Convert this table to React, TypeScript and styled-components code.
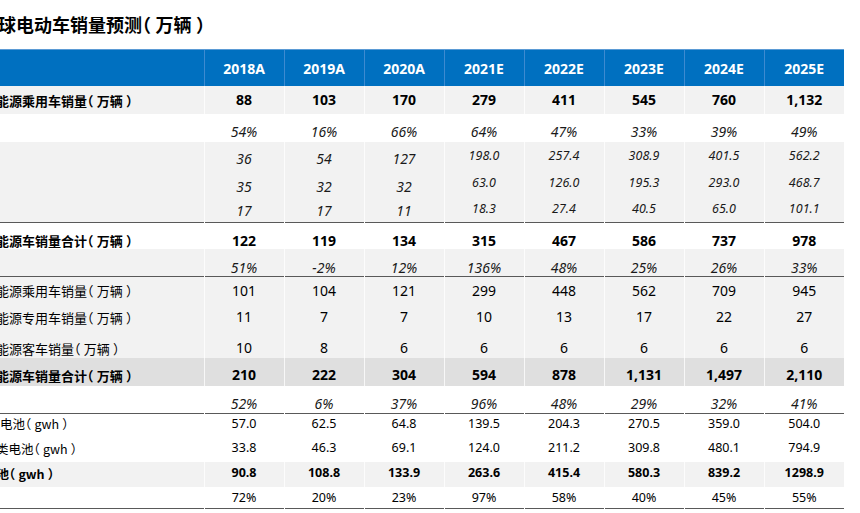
import React from "react";
import styled, { createGlobalStyle } from "styled-components";

const GlobalStyle = createGlobalStyle`
  html, body {
    margin: 0;
    padding: 0;
    background: #ffffff;
    overflow: hidden;
  }
  body {
    font-family: "Noto Sans", "Noto Sans CJK SC", sans-serif;
    color: #000000;
  }
`;

const cjk = `"Noto Sans CJK SC", "Noto Sans", sans-serif`;

const Page = styled.div`
  width: 860px;
  height: 513px;
  overflow: hidden;
`;

const Title = styled.h1`
  margin: 0;
  height: 49px;
  line-height: 48px;
  font-family: ${cjk};
  font-size: 18px;
  font-weight: 700;
  color: #000000;
  text-indent: -20px;
  white-space: nowrap;
`;

// YaHei style brackets: the ink sits on the outer side, the gap on the inner side
const Paren = styled.span<{ $open?: boolean }>`
  font-feature-settings: "halt" 1;
  padding-left: ${(p) => (p.$open ? "0" : "0.25em")};
  padding-right: ${(p) => (p.$open ? "0.25em" : "0")};
`;

function withParens(text: string) {
  return text.split(/([（）])/).map((part, i) => {
    if (part === "（") return <Paren key={i} $open>（</Paren>;
    if (part === "）") return <Paren key={i}>）</Paren>;
    return <React.Fragment key={i}>{part}</React.Fragment>;
  });
}

const Table = styled.table`
  border-collapse: collapse;
  table-layout: fixed;
  width: 844px;
`;

const Col = styled.col<{ $w: number }>`
  width: ${(p) => p.$w}px;
`;

const HeadCell = styled.th<{ $first?: boolean }>`
  height: 36px;
  padding: 0;
  background: #0070c0;
  border-top: 1px solid #5b9bd5;
  border-left: ${(p) => (p.$first ? "none" : "1px solid #3d8ad0")};
  color: #ffffff;
  font-size: 14px;
  font-weight: 700;
  text-align: center;
`;

type Tone = "white" | "gray" | "dark";

const tones: Record<Tone, string> = {
  white: "#ffffff",
  gray: "#f2f2f2",
  dark: "#dfdfdf",
};

const Row = styled.tr<{ $h: number; $tone: Tone; $rule?: boolean }>`
  height: ${(p) => p.$h}px;
  background: ${(p) => tones[p.$tone]};
  border-bottom: ${(p) => (p.$rule ? "1px solid #595959" : "none")};
`;

const Label = styled.td<{ $bold?: boolean; $indent: number; $size: number; $pad: number }>`
  box-sizing: border-box;
  padding: ${(p) => p.$pad}px 0 0 0;
  vertical-align: top;
  font-family: ${cjk};
  font-size: ${(p) => p.$size}px;
  font-weight: ${(p) => (p.$bold ? 700 : 400)};
  text-indent: ${(p) => p.$indent}px;
  white-space: nowrap;
  color: #000000;
  line-height: 1;
`;

const Num = styled.td<{
  $bold?: boolean;
  $italic?: boolean;
  $size: number;
  $pad: number;
}>`
  box-sizing: border-box;
  padding: ${(p) => p.$pad}px 0 0 0;
  text-align: center;
  vertical-align: top;
  font-size: ${(p) => p.$size}px;
  font-weight: ${(p) => (p.$bold ? 700 : 400)};
  font-style: ${(p) => (p.$italic ? "italic" : "normal")};
  color: ${(p) => (p.$italic ? "#1a1a1a" : "#000000")};
  border-left: 1px solid rgba(255, 255, 255, 0.75);
  line-height: 1;
  white-space: nowrap;
`;

type RowData = {
  h: number;
  tone: Tone;
  rule?: boolean;
  label?: string;
  indent?: number;
  labelSize?: number;
  bold?: boolean;
  italic?: boolean;
  size: number;
  lateSize?: number;
  pad: number;
  latePad?: number;
  values: string[];
};

const years = ["2018A", "2019A", "2020A", "2021E", "2022E", "2023E", "2024E", "2025E"];

const rows: RowData[] = [
  { h: 28, tone: "gray", label: "新能源乘用车销量（万辆）", indent: -17, bold: true, size: 14, pad: 7,
    values: ["88", "103", "170", "279", "411", "545", "760", "1,132"] },
  { h: 28, tone: "white", italic: true, size: 14, pad: 11,
    values: ["54%", "16%", "66%", "64%", "47%", "33%", "39%", "49%"] },
  { h: 27, tone: "gray", italic: true, size: 14, lateSize: 12.5, pad: 10, latePad: 8,
    values: ["36", "54", "127", "198.0", "257.4", "308.9", "401.5", "562.2"] },
  { h: 27, tone: "gray", italic: true, size: 14, lateSize: 12.5, pad: 11, latePad: 8,
    values: ["35", "32", "32", "63.0", "126.0", "195.3", "293.0", "468.7"] },
  { h: 26, tone: "gray", rule: true, italic: true, size: 14, lateSize: 12.5, pad: 8, latePad: 7,
    values: ["17", "17", "11", "18.3", "27.4", "40.5", "65.0", "101.1"] },
  { h: 27, tone: "white", label: "新能源车销量合计（万辆）", indent: -17, bold: true, size: 14, pad: 11,
    values: ["122", "119", "134", "315", "467", "586", "737", "978"] },
  { h: 27, tone: "gray", rule: true, italic: true, size: 14, pad: 12,
    values: ["51%", "-2%", "12%", "136%", "48%", "25%", "26%", "33%"] },
  { h: 28, tone: "gray", label: "新能源乘用车销量（万辆）", indent: -17, size: 14, pad: 7,
    values: ["101", "104", "121", "299", "448", "562", "709", "945"] },
  { h: 27, tone: "gray", label: "新能源专用车销量（万辆）", indent: -17, size: 14, pad: 6,
    values: ["11", "7", "7", "10", "13", "17", "22", "27"] },
  { h: 27, tone: "gray", label: "新能源客车销量（万辆）", indent: -17, size: 14, pad: 10,
    values: ["10", "8", "6", "6", "6", "6", "6", "6"] },
  { h: 28, tone: "dark", label: "新能源车销量合计（万辆）", indent: -17, bold: true, size: 14, pad: 10,
    values: ["210", "222", "304", "594", "878", "1,131", "1,497", "2,110"] },
  { h: 27, tone: "white", rule: true, italic: true, size: 14, pad: 11,
    values: ["52%", "6%", "37%", "96%", "48%", "29%", "32%", "41%"] },
  { h: 24, tone: "white", label: "三元电池（gwh）", indent: -25, labelSize: 12.5, size: 12.5, pad: 4,
    values: ["57.0", "62.5", "64.8", "139.5", "204.3", "270.5", "359.0", "504.0"] },
  { h: 25, tone: "white", label: "其他类电池（gwh）", indent: -29, labelSize: 12.5, size: 12.5, pad: 5,
    values: ["33.8", "46.3", "69.1", "124.0", "211.2", "309.8", "480.1", "794.9"] },
  { h: 25, tone: "gray", label: "动力电池（gwh）", indent: -41, labelSize: 12.5, bold: true, size: 12.5, pad: 5,
    values: ["90.8", "108.8", "133.9", "263.6", "415.4", "580.3", "839.2", "1298.9"] },
  { h: 21, tone: "white", rule: true, size: 12.5, pad: 5,
    values: ["72%", "20%", "23%", "97%", "58%", "40%", "45%", "55%"] },
];

export default function App() {
  return (
    <Page>
      <GlobalStyle />
      <Title>{withParens("全球电动车销量预测（万辆）")}</Title>
      <Table>
        <colgroup>
          <Col $w={204} />
          {years.map((y) => (
            <Col key={y} $w={80} />
          ))}
        </colgroup>
        <thead>
          <tr>
            <HeadCell $first />
            {years.map((y) => (
              <HeadCell key={y}>{y}</HeadCell>
            ))}
          </tr>
        </thead>
        <tbody>
          {rows.map((r, i) => (
            <Row key={i} $h={r.h} $tone={r.tone} $rule={r.rule}>
              <Label
                $bold={r.bold}
                $indent={r.indent ?? 0}
                $size={r.labelSize ?? 13}
                $pad={r.pad + 0.5}
              >
                {r.label ? withParens(r.label) : ""}
              </Label>
              {r.values.map((v, j) => {
                const late = j >= 3 && r.lateSize !== undefined;
                return (
                  <Num
                    key={j}
                    $bold={r.bold}
                    $italic={r.italic}
                    $size={late ? r.lateSize! : r.size}
                    $pad={late ? r.latePad ?? r.pad : r.pad}
                  >
                    {v}
                  </Num>
                );
              })}
            </Row>
          ))}
        </tbody>
      </Table>
    </Page>
  );
}
